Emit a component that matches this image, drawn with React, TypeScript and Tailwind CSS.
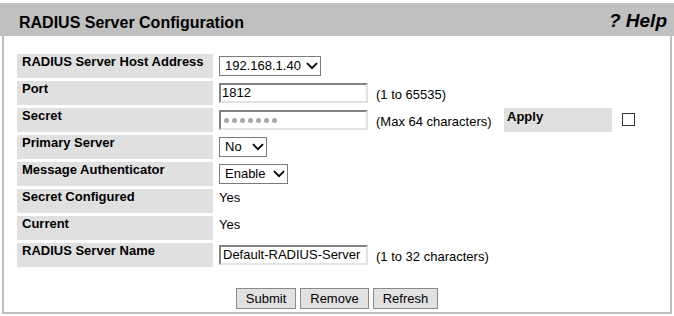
const font = { fontFamily: '"Liberation Sans", Arial, sans-serif' };

function Chevron() {
  return (
    <svg width="12" height="8" viewBox="0 0 12 8" className="shrink-0">
      <path d="M1 1.2 L6 6.2 L11 1.2" fill="none" stroke="#000" strokeWidth="1.8" />
    </svg>
  );
}

function FakeSelect({ value, width }: { value: string; width: string }) {
  return (
    <div
      className={`mt-[2px] flex h-[20px] items-start justify-between border border-[#7a7a7a] bg-white pl-[5px] pr-[2px] pt-[1px] text-[13px] leading-[15px] text-black ${width}`}
    >
      <span>{value}</span>
      <span className="mt-[4px]">
        <Chevron />
      </span>
    </div>
  );
}

function FakeInput({ children }: { children: React.ReactNode }) {
  return (
    <div className="mt-[2px] flex h-[20px] w-[149px] items-start border-2 border-b-[#e3e3e3] border-l-[#838383] border-r-[#e3e3e3] border-t-[#838383] bg-white pl-[1px] text-[13px] leading-[15px] text-black">
      {children}
    </div>
  );
}

function Label({ children }: { children: React.ReactNode }) {
  return (
    <div className="h-[24px] bg-[#e0e0e0] pl-[5px] text-[13px] font-bold leading-[15px] text-black">
      {children}
    </div>
  );
}

function Hint({ children }: { children: React.ReactNode }) {
  return <div className="pl-[4px] pt-[6px] text-[13px] leading-[15px] text-black">{children}</div>;
}

const dots = [0, 1, 2, 3, 4, 5, 6];

export default function App() {
  return (
    <div className="h-[316px] w-[674px] bg-white pt-[3px]" style={font}>
      <div className="flex h-[33px] items-start justify-between bg-[#c0c0c0] pl-[19px] pr-[7px]">
        <h1 className="mt-[12px] text-[16px] font-bold leading-[16px] text-black">
          RADIUS Server Configuration
        </h1>
        <span className="mt-[8px] text-[19px] font-bold italic leading-[19px] text-black">? Help</span>
      </div>

      <div className="mx-[2px] border-2 border-t-0 border-[#c0c0c0] pb-[3px] pl-[13px] pt-[18px]">
        <div className="grid grid-cols-[196px_159px_132px_108px_auto] grid-rows-[repeat(8,24px)] gap-y-[3px]">
          <Label>RADIUS Server Host Address</Label>
          <div className="pl-[6px]">
            <FakeSelect value="192.168.1.40" width="w-[102px]" />
          </div>
          <div className="col-span-3" />

          <Label>Port</Label>
          <div className="pl-[6px]">
            <FakeInput>1812</FakeInput>
          </div>
          <Hint>(1 to 65535)</Hint>
          <div className="col-span-2" />

          <Label>Secret</Label>
          <div className="pl-[6px]">
            <FakeInput>
              <div className="flex h-full items-center gap-[3px] pl-[2px]">
                {dots.map((d) => (
                  <span key={d} className="h-[5px] w-[5px] rounded-full bg-[#a8a8a8]" />
                ))}
              </div>
            </FakeInput>
          </div>
          <Hint>(Max 64 characters)</Hint>
          <div className="bg-[#e0e0e0] pl-[3px] pt-[1px] text-[13px] font-bold leading-[15px] text-black">Apply</div>
          <div className="pl-[10px] pt-[5px]">
            <div className="h-[13px] w-[13px] border border-[#333] bg-white" />
          </div>

          <Label>Primary Server</Label>
          <div className="pl-[6px]">
            <FakeSelect value="No" width="w-[48px]" />
          </div>
          <div className="col-span-3" />

          <Label>Message Authenticator</Label>
          <div className="pl-[6px]">
            <FakeSelect value="Enable" width="w-[69px]" />
          </div>
          <div className="col-span-3" />

          <Label>Secret Configured</Label>
          <div className="pl-[6px] pt-[1px] text-[13px] leading-[15px] text-black">Yes</div>
          <div className="col-span-3" />

          <Label>Current</Label>
          <div className="pl-[6px] pt-[1px] text-[13px] leading-[15px] text-black">Yes</div>
          <div className="col-span-3" />

          <Label>RADIUS Server Name</Label>
          <div className="pl-[6px]">
            <FakeInput>
              <span className="pl-[1px]">Default-RADIUS-Server</span>
            </FakeInput>
          </div>
          <Hint>(1 to 32 characters)</Hint>
          <div className="col-span-2" />
        </div>

        <div className="mt-[21px] flex justify-center gap-[4px] pr-[13px]">
          {["Submit", "Remove", "Refresh"].map((b) => (
            <button
              key={b}
              className="h-[21px] border border-[#8a8a8a] bg-[#e1e1e1] px-[9px] text-[13px] leading-[15px] text-black"
            >
              {b}
            </button>
          ))}
        </div>
      </div>
    </div>
  );
}
